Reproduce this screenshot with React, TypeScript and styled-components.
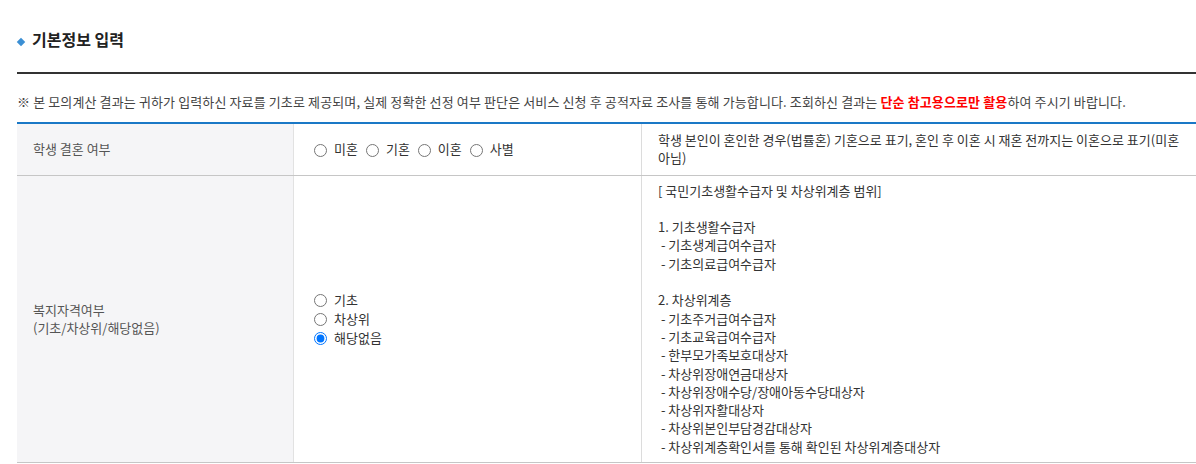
import React from 'react';
import styled, {createGlobalStyle} from 'styled-components';

const GlobalStyle = createGlobalStyle`
  body {
    margin: 0;
    background: #fff;
    font-family: "Noto Sans CJK KR", "Noto Sans", sans-serif;
    color: #333;
  }
`;

const marriageOptions = ['미혼', '기혼', '이혼', '사별'];
const welfareOptions = ['기초', '차상위', '해당없음'];

const welfareInfo = [
    '[ 국민기초생활수급자 및 차상위계층 범위]',
    '',
    '1. 기초생활수급자',
    ' - 기초생계급여수급자',
    ' - 기초의료급여수급자',
    '',
    '2. 차상위계층',
    ' - 기초주거급여수급자',
    ' - 기초교육급여수급자',
    ' - 한부모가족보호대상자',
    ' - 차상위장애연금대상자',
    ' - 차상위장애수당/장애아동수당대상자',
    ' - 차상위자활대상자',
    ' - 차상위본인부담경감대상자',
    ' - 차상위계층확인서를 통해 확인된 차상위계층대상자',
];

export default function App() {
    return (
        <>
            <GlobalStyle/>
            <Page>
                <TitleBar>
                    <Diamond/>
                    <h2>기본정보 입력</h2>
                </TitleBar>

                <Notice>
                    ※ 본 모의계산 결과는 귀하가 입력하신 자료를 기초로 제공되며, 실제 정확한 선정 여부 판단은 서비스 신청 후
                    공적자료 조사를 통해 가능합니다. 조회하신 결과는 <Warn>단순 참고용으로만 활용</Warn>하여 주시기 바랍니다.
                </Notice>

                <Table>
                    <Row>
                        <HeadCell>학생 결혼 여부</HeadCell>
                        <InputCell>
                            <InlineOptions>
                                {marriageOptions.map(o =>
                                    <RadioLabel key={o}>
                                        <input type="radio" name="marriage"/>
                                        {o}
                                    </RadioLabel>)}
                            </InlineOptions>
                        </InputCell>
                        <DescCell $pad="7px">
                            학생 본인이 혼인한 경우(법률혼) 기혼으로 표기, 혼인 후 이혼 시 재혼 전까지는 이혼으로 표기(미혼 아님)
                        </DescCell>
                    </Row>
                    <Row>
                        <HeadCell>
                            복지자격여부<br/>(기초/차상위/해당없음)
                        </HeadCell>
                        <InputCell>
                            <StackOptions>
                                {welfareOptions.map(o =>
                                    <RadioLabel key={o}>
                                        <input type="radio" name="welfare" defaultChecked={o === '해당없음'}/>
                                        {o}
                                    </RadioLabel>)}
                            </StackOptions>
                        </InputCell>
                        <DescCell $pad="6px">
                            {welfareInfo.map((line, i) =>
                                <InfoLine key={i}>{line || '\u00a0'}</InfoLine>)}
                        </DescCell>
                    </Row>
                </Table>
            </Page>
        </>
    );
}

const Page = styled.div`
  padding-left: 17px;
  overflow: hidden;
`

const TitleBar = styled.div`
  display: flex;
  align-items: center;
  gap: 8px;
  padding: 29px 0 23px;
  border-bottom: 2px solid #333;

  h2 {
    margin: 0;
    font-size: 16px;
    line-height: 20px;
    font-weight: 700;
    color: #222;
  }
`

const Diamond = styled.span`
  width: 6px;
  height: 6px;
  margin: 6px 0 0 1px;
  background: #3b8fd4;
  transform: rotate(45deg);
`

const Notice = styled.p`
  margin: 19px 0 11px;
  font-size: 13px;
  line-height: 18px;
  letter-spacing: 0.12px;
  color: #444;
  white-space: nowrap;
`

const Warn = styled.strong`
  color: #ff0000;
  font-weight: 700;
`

const Table = styled.div`
  border-top: 2px solid #1a78c6;
`

const Row = styled.div`
  display: grid;
  grid-template-columns: 276px 348px 1fr;
  border-bottom: 1px solid #c6c6c6;
`

const HeadCell = styled.div`
  display: flex;
  align-items: center;
  padding: 0 16px;
  background: #f5f5f7;
  font-size: 13px;
  line-height: 18px;
  color: #555;
`

const InputCell = styled.div`
  display: flex;
  align-items: center;
  padding: 0 20px;
  border-left: 1px solid #e2e2e2;
  font-size: 13px;
  color: #333;
`

const DescCell = styled.div<{ $pad: string }>`
  padding: ${p => p.$pad} 6px ${p => p.$pad} 16px;
  border-left: 1px solid #dcdcdc;
  font-size: 13px;
  line-height: 18.3px;
  color: #333;
`

const InfoLine = styled.div`
  white-space: pre;
`

const InlineOptions = styled.div`
  display: flex;
  gap: 8px;
`

const StackOptions = styled.div`
  display: flex;
  flex-direction: column;
  gap: 1px;
`

const RadioLabel = styled.label`
  display: flex;
  align-items: center;
  gap: 7px;
  line-height: 18px;

  input {
    width: 13px;
    height: 13px;
    margin: 2px 0 0;
  }
`
